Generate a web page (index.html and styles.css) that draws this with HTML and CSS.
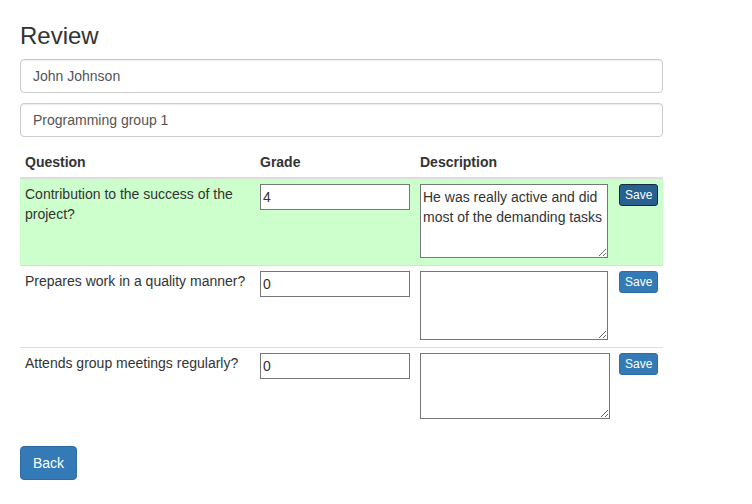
FILE: index.html
```html
<!DOCTYPE html>
<html>
<head>
<meta charset="utf-8">
<link rel="stylesheet" href="styles.css">
</head>
<body>
<div class="page">
  <h3 class="title">Review</h3>
  <input class="form-control" type="text" value="John Johnson">
  <input class="form-control" type="text" value="Programming group 1">
  <table class="review-table">
    <thead>
      <tr>
        <th class="col-q">Question</th>
        <th class="col-g">Grade</th>
        <th class="col-d">Description</th>
        <th class="col-s"></th>
      </tr>
    </thead>
    <tbody>
      <tr class="success">
        <td>Contribution to the success of the project?</td>
        <td><input class="grade" type="text" value="4"></td>
        <td><textarea class="desc desc-1">He was really active and did most of the demanding tasks</textarea></td>
        <td><button class="btn-xs focused">Save</button></td>
      </tr>
      <tr>
        <td>Prepares work in a quality manner?</td>
        <td><input class="grade" type="text" value="0"></td>
        <td><textarea class="desc desc-2"></textarea></td>
        <td><button class="btn-xs">Save</button></td>
      </tr>
      <tr>
        <td>Attends group meetings regularly?</td>
        <td><input class="grade" type="text" value="0"></td>
        <td><textarea class="desc desc-3"></textarea></td>
        <td><button class="btn-xs">Save</button></td>
      </tr>
    </tbody>
  </table>
  <button class="btn-back">Back</button>
</div>
</body>
</html>
```

FILE: styles.css
```css
* {
  box-sizing: border-box;
}

html, body {
  margin: 0;
  padding: 0;
  background: #fff;
}

body {
  font-family: "Liberation Sans", Arial, Helvetica, sans-serif;
  font-size: 14px;
  line-height: 20px;
  color: #333;
}

.page {
  width: 643px;
  margin-left: 20px;
  padding-top: 23px;
}

.title {
  font-size: 24px;
  font-weight: 500;
  line-height: 1.1;
  margin: 0 0 10px 0;
  color: #333;
}

.form-control {
  display: block;
  width: 100%;
  height: 34px;
  padding: 6px 12px;
  font-family: inherit;
  font-size: 14px;
  line-height: 20px;
  color: #555;
  background: #fff;
  border: 1px solid #ccc;
  border-radius: 4px;
  box-shadow: inset 0 1px 1px rgba(0, 0, 0, 0.075);
  margin: 0 0 10px 0;
}

.review-table {
  width: 643px;
  table-layout: fixed;
  border-collapse: collapse;
  border-spacing: 0;
  margin-bottom: 20px;
}

.review-table th {
  text-align: left;
  font-weight: bold;
  padding: 5px;
  border-bottom: 2px solid #ddd;
  vertical-align: bottom;
}

.review-table td {
  padding: 5px;
  vertical-align: top;
  border-top: 1px solid #ddd;
}

.review-table tbody tr:first-child td {
  border-top: 0;
}

.review-table tr.success td {
  background: #ccffcc;
}

.col-q { width: 235px; }
.col-g { width: 160px; }
.col-d { width: 199px; }
.col-s { width: 49px; }

.grade {
  display: block;
  width: 150px;
  height: 26px;
  margin: 0;
  padding: 2px 2px;
  font-family: inherit;
  font-size: 14px;
  line-height: 20px;
  color: #333;
  border: 1px solid #767676;
  background: #fff;
  outline: none;
}

.desc {
  display: block;
  width: 188px;
  margin: 0 0 2px 0;
  padding: 2px;
  font-family: inherit;
  font-size: 14px;
  line-height: 20px;
  color: #333;
  border: 1px solid #767676;
  background: #fff;
  resize: both;
  overflow: auto;
}

.desc-1 { height: 74px; }
.desc-2 { height: 69px; }
.desc-3 { height: 66px; width: 190px; }

.btn-xs {
  display: block;
  margin: 0;
  padding: 1px 5px;
  font-family: inherit;
  font-size: 12px;
  line-height: 18px;
  color: #fff;
  background: #337ab7;
  border: 1px solid #2e6da4;
  border-radius: 3px;
  cursor: pointer;
}

.btn-xs.focused {
  background: #286090;
  border-color: #122b40;
}

.btn-back {
  display: inline-block;
  padding: 6px 12px;
  font-family: inherit;
  font-size: 14px;
  line-height: 20px;
  color: #fff;
  background: #337ab7;
  border: 1px solid #2e6da4;
  border-radius: 4px;
  cursor: pointer;
}
```
